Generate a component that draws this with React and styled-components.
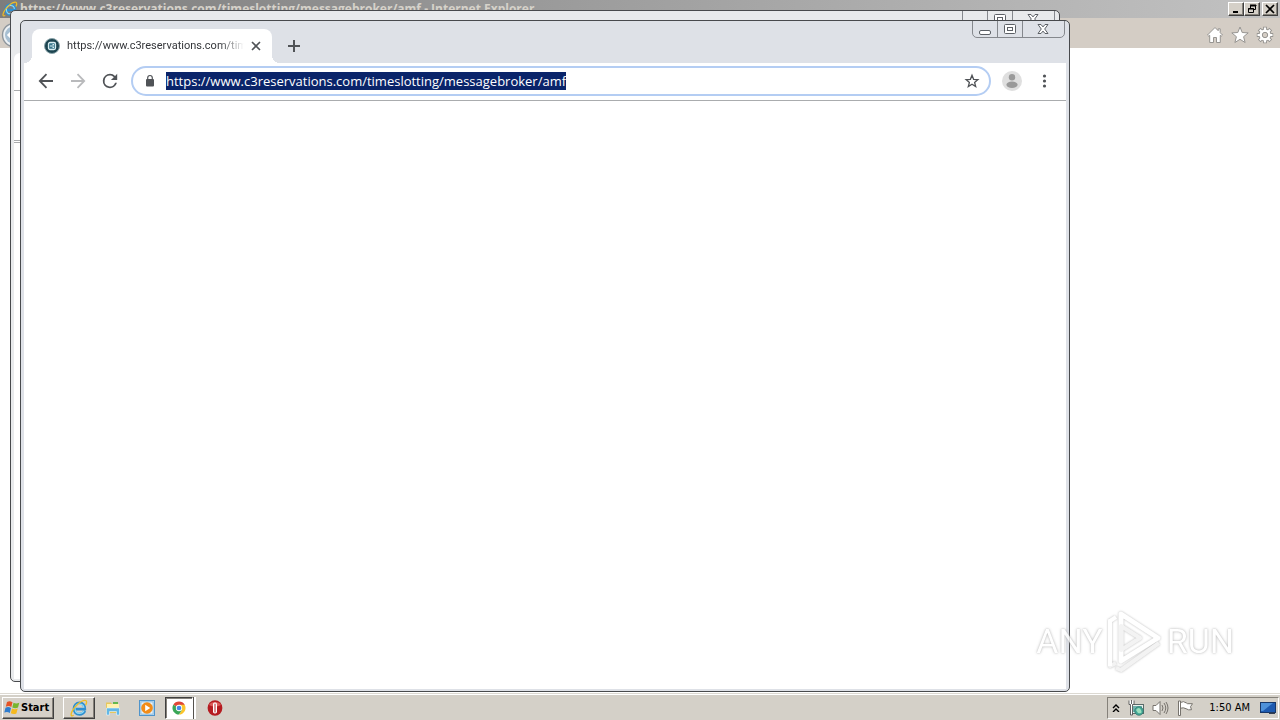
import React from "react";
import styled, { createGlobalStyle, css } from "styled-components";

const PAGE_URL = "https://www.c3reservations.com/timeslotting/messagebroker/amf";

const Global = createGlobalStyle`
  * { box-sizing: border-box; }
  body { margin: 0; background: #fff; font-family: "Open Sans", "Noto Sans", sans-serif; }
  button, input { font: inherit; margin: 0; padding: 0; border: 0; }
  svg { display: block; flex: none; }
`;

const Desktop = styled.div`
  position: relative;
  display: flex;
  flex-direction: column;
  min-height: 100vh;
  overflow: hidden;
`;

/* Internet Explorer */
const Explorer = styled.main`
  flex: 1;
  display: flex;
  flex-direction: column;
`;
const ExplorerTitle = styled.header`
  display: flex;
  align-items: center;
  gap: 2px;
  height: 18px;
  padding: 0 2px;
  background: linear-gradient(90deg, #7d7d7d, #c2c2c2);
`;
const TitleText = styled.h1`
  flex: 1;
  margin: 0;
  color: #d6d2ca;
  font: bold 12px/18px "Open Sans", "DejaVu Sans", sans-serif;
  white-space: nowrap;
`;
const ClassicGroup = styled.div`
  display: flex;
`;
const raised = css`
  background: #d5d0c8;
  border: 1px solid;
  border-color: #fff #404040 #404040 #fff;
  box-shadow: inset -1px -1px #85817a;
`;
const ClassicButton = styled.button`
  ${raised}
  width: 16px;
  height: 14px;
  display: grid;
  place-items: center;
  &:last-child { margin-left: 2px; }
`;
const ExplorerBar = styled.nav`
  display: flex;
  align-items: center;
  justify-content: space-between;
  height: 30px;
  padding: 4px 5px 0 1px;
  background: #d4cdc5;
`;
const IconRow = styled.div`
  display: flex;
  gap: 5px;
`;
const PlainButton = styled.button`
  background: none;
  width: ${(p) => p.$size || 20}px;
  height: ${(p) => p.$size || 20}px;
  display: grid;
  place-items: center;
`;

/* Chrome windows */
const Window = styled.section`
  position: absolute;
  top: ${(p) => p.$offset}px;
  left: ${(p) => p.$offset}px;
  right: ${(p) => 230 - p.$offset}px;
  bottom: ${(p) => 48 - p.$offset}px;
  display: flex;
  flex-direction: column;
  padding: 0 3px 2px;
  border: 1px solid #484a4d;
  border-radius: 5px;
  background: ${(p) => (p.$back ? "#e8eaec" : "#dee1e7")};
  overflow: hidden;
`;
const TabStrip = styled.div`
  display: flex;
  align-items: flex-end;
  height: 42px;
  padding-left: 8px;
`;
const Tab = styled.div`
  position: relative;
  display: flex;
  align-items: center;
  width: 240px;
  height: 34px;
  padding: 0 10px 0 12px;
  border-radius: 8px 8px 0 0;
  background: #fff;
  &::before, &::after {
    content: "";
    position: absolute;
    bottom: 0;
    width: 8px;
    height: 8px;
  }
  &::before { right: 100%; background: radial-gradient(circle at 0 0, transparent 8px, #fff 8px); }
  &::after { left: 100%; background: radial-gradient(circle at 100% 0, transparent 8px, #fff 8px); }
`;
const TabTitle = styled.span`
  flex: 1;
  margin: 0 6px 0 7px;
  overflow: hidden;
  white-space: nowrap;
  color: #34363a;
  font: 11px/16px "Roboto", "Open Sans", sans-serif;
  mask-image: linear-gradient(90deg, #000 calc(100% - 24px), transparent);
`;
const NewTab = styled(PlainButton)`
  margin: 0 0 7px 12px;
`;
const Captions = styled.div`
  position: absolute;
  top: -1px;
  right: 4px;
  display: flex;
  height: 18px;
  border: 1px solid #85888d;
  border-radius: 0 0 5px 5px;
`;
const Caption = styled.button`
  width: ${(p) => (p.$wide ? 42 : 25)}px;
  padding: 0 1px 1px 0;
  background: none;
  display: grid;
  place-items: center;
  & + & { border-left: 1px solid #85888d; }
  &:first-child { width: 24px; }
`;
const Toolbar = styled.div`
  display: flex;
  align-items: center;
  height: 38px;
  padding: 0 10px 1px;
  background: #fff;
  border-bottom: 1px solid #aaacae;
`;
const NavButtons = styled.div`
  display: flex;
  gap: 8px;
  margin-right: 9px;
`;
const Omnibox = styled.div`
  flex: 1;
  display: flex;
  align-items: center;
  height: 30px;
  padding: 0 7px 0 10px;
  border: 2px solid #b4cdf3;
  border-radius: 15px;
  background: #fff;
`;
const AddressSlot = styled.label`
  flex: 1;
  display: flex;
  margin-left: 9px;
`;
const Address = styled.input`
  field-sizing: content;
  height: 18px;
  background: #0a246a;
  color: #fff;
  font-size: 13px;
  line-height: 18px;
  outline: 0;
`;
const Trailing = styled.div`
  display: flex;
  gap: 8px;
  margin-left: 9px;
`;
const Page = styled.div`
  flex: 1;
  background: #fff;
`;
const BackStrip = styled.div`
  height: 42px;
`;
const BackToolbar = styled.div`
  height: 38px;
  border-bottom: 1px solid #aaacae;
  background: #fff;
  border-radius: 6px 0 0 0;
`;
const BackBookmarks = styled.div`
  height: 52px;
  border-bottom: 3px double #aaacae;
  background: #fff;
`;

/* Taskbar */
const Taskbar = styled.footer`
  display: flex;
  align-items: center;
  height: 27px;
  padding: 1px 1px 0 2px;
  background: #d4d0c8;
  border-top: 1px solid #dcd9d2;
  box-shadow: inset 0 1px #fff;
`;
const StartButton = styled.button`
  ${raised}
  display: flex;
  align-items: center;
  width: 52px;
  height: 22px;
  padding-left: 1px;
  color: #000;
  font: bold 11px/16px "DejaVu Sans Condensed", "DejaVu Sans", sans-serif;
`;
const Tasks = styled.div`
  flex: 1;
  display: flex;
  align-items: center;
  gap: 2px;
  margin-left: 9px;
`;
const Task = styled.button`
  width: 32px;
  height: 22px;
  display: grid;
  place-items: center;
  background: none;
  ${(p) => p.$raised && raised}
  ${(p) => p.$pressed && css`
    background: #fff;
    border: 1px solid;
    border-color: #404040 #fff #fff #404040;
    box-shadow: inset 1px 1px #85817a, 1px 0 #55524d, 3px 0 #fff;
    width: 28px;
    margin: 0 4px 0 0;
  `}
`;
const Tray = styled.div`
  display: flex;
  align-items: center;
  gap: 8px;
  height: 22px;
  padding: 0 1px 0 4px;
  border: 1px solid;
  border-color: #85817a #fff #fff #85817a;
`;
const Clock = styled.time`
  margin: 0 2px 0 8px;
  color: #000;
  font: 11px/16px "DejaVu Sans Condensed", "DejaVu Sans", sans-serif;
  white-space: nowrap;
`;

const Watermark = styled.div`
  position: absolute;
  right: 46px;
  bottom: 47px;
  display: flex;
  align-items: center;
  gap: 4px;
  color: #fff;
  opacity: 0.8;
  font: 34px/64px "Roboto", sans-serif;
  text-shadow: 0 0 3px #aaa, 0 0 1px #bbb;
  pointer-events: none;
`;

const IeLogo = ({ size }) => (
  <svg width={size} height={size} viewBox="0 0 20 20" fill="none">
    <path d="M16.5 13.3C15.3 15.8 13 17 10.5 17 7 17 4.5 14.3 4.5 10.8S7 4.5 10.6 4.5s6 2.6 5.8 6.7H6" stroke="#2f8fd0" strokeWidth="3.2" />
    <path d="M15.5 13C14.5 15.2 12.7 16 10.5 16 7.6 16 5.6 13.8 5.6 10.8s2-5.2 5-5.2 4.8 2 4.8 4.5" stroke="#8fdcf7" strokeWidth="1.3" />
    <path d="M4 18C1.5 20 .2 18 2.3 13.7 5 8 13 .8 17 1.5c2 .3 1.7 3 .4 5.3" stroke="#efbd25" strokeWidth="1.5" />
  </svg>
);
const BackOrb = () => (
  <svg width="26" height="26" viewBox="0 0 26 26">
    <circle cx="13" cy="13" r="11.5" fill="#edf1f4" stroke="#8e969d" strokeWidth="1.4" />
    <circle cx="13" cy="13" r="9" fill="#a7bfd2" />
    <path d="M19 13H8m5-5-5 5 5 5" stroke="#fff" strokeWidth="3" fill="none" />
  </svg>
);
const Home = () => (
  <svg width="18" height="18" viewBox="0 0 18 18" fill="#fff" stroke="#969491">
    <path d="M9 1.5 1.5 9l1.2 1.1 1-.8v7.2h3.8v-5h3v5h3.8V9.3l1 .8L16.5 9l-2.300-2.300V2.800h-2v1.900Z" />
  </svg>
);
const Favorite = () => (
  <svg width="18" height="18" viewBox="0 0 18 18" fill="#fff" stroke="#969491">
    <path d="m9 1 2.200 5.500 6 .4-4.600 3.800 1.500 5.800L9 13.300l-5.100 3.200 1.500-5.800L.8 6.900l6-.4Z" />
  </svg>
);
const Gear = () => (
  <svg width="18" height="18" viewBox="0 0 18 18">
    <g stroke="#969491" strokeWidth="4"><path d="M9 .8v16.400M.8 9h16.400M3.200 3.200l11.600 11.600M14.800 3.200 3.200 14.800" /></g>
    <circle cx="9" cy="9" r="6.500" fill="#969491" />
    <g stroke="#fff" strokeWidth="2.200"><path d="M9 1.500v15M1.500 9h15M3.800 3.800l10.400 10.400M14.200 3.800 3.800 14.200" /></g>
    <circle cx="9" cy="9" r="5.500" fill="#fff" />
    <circle cx="9" cy="9" r="2.700" fill="#d4cdc5" stroke="#969491" />
  </svg>
);
const Favicon = () => (
  <svg width="16" height="16" viewBox="0 0 16 16">
    <circle cx="8" cy="8" r="7.500" fill="#1c4450" stroke="#8ba4aa" />
    <rect x="4.500" y="4.500" width="7" height="7" rx="1.500" fill="#38768b" stroke="#d8edf1" strokeWidth="1.300" />
    <path d="M6 8h4M8.500 6.500H10M8.500 9.500H10" stroke="#d8edf1" />
  </svg>
);
const Stroke = ({ size = 20, d, color = "#505357", width = 2 }) => (
  <svg width={size} height={size} viewBox={`0 0 ${size} ${size}`} fill="none" stroke={color} strokeWidth={width}>
    <path d={d} />
  </svg>
);
const Reload = () => (
  <svg width="24" height="24" viewBox="0 0 24 24" fill="#505357">
    <path d="M17.650 6.350A7.960 7.960 0 0 0 12 4a8 8 0 1 0 7.730 10h-2.080A6 6 0 1 1 12 6c1.660 0 3.140.690 4.220 1.780L13 11h7V4z" transform="translate(1.200 1.200) scale(.9)" />
  </svg>
);
const Lock = () => (
  <svg width="14" height="14" viewBox="0 0 14 14">
    <rect x="3" y="5" width="8" height="7.500" rx="1" fill="#505357" />
    <path d="M4.700 5.500V3.800a2.300 2.300 0 0 1 4.600 0v1.700" fill="none" stroke="#505357" strokeWidth="1.200" />
  </svg>
);
const Avatar = () => (
  <svg width="20" height="20" viewBox="0 0 20 20">
    <circle cx="10" cy="10" r="10" fill="#dfdfdf" />
    <circle cx="10" cy="6.200" r="3.200" fill="#9a9a9a" />
    <ellipse cx="10" cy="13.800" rx="5.600" ry="3.200" fill="#9a9a9a" />
  </svg>
);
const Dots = () => (
  <svg width="20" height="20" viewBox="0 0 20 20" fill="#505357">
    <circle cx="10.500" cy="5" r="1.600" /><circle cx="10.500" cy="10" r="1.600" /><circle cx="10.500" cy="15" r="1.600" />
  </svg>
);
const WindowCaptions = () => (
  <Captions>
    <Caption aria-label="Minimize">
      <svg width="14" height="14" viewBox="0 0 14 14"><rect x="1.500" y="8.500" width="11" height="4" rx="1.500" fill="#fff" stroke="#5c6066" /></svg>
    </Caption>
    <Caption aria-label="Maximize">
      <svg width="14" height="14" viewBox="0 0 14 14" fill="#fff" stroke="#5c6066"><rect x="1.500" y="2.500" width="11" height="9" rx="1" /><rect x="4.500" y="5.500" width="5" height="3" /></svg>
    </Caption>
    <Caption $wide aria-label="Close">
      <svg width="14" height="14" viewBox="0 0 14 14"><path d="M2 2.500h3l2 2.400 2-2.400h3L8.700 7l3.300 4.500H9L7 9.100l-2 2.400H2L5.300 7Z" fill="#fff" stroke="#5c6066" /></svg>
    </Caption>
  </Captions>
);

const WindowsFlag = () => (
  <svg width="17" height="16" viewBox="0 0 17 16">
    <path d="M3 2c2-1 3.500-1 5.500.3L7.300 7C5.500 5.800 4 5.800 1.800 6.700Z" fill="#e55325" />
    <path d="M9.500 2.800c2 1 3.700.9 5.800 0L14 7.500c-2 1-3.800.8-5.700-.1Z" fill="#77b52d" />
    <path d="M1.500 7.800c2-1 3.800-.9 5.500.3l-1.200 4.800C4 11.700 2.300 11.700.3 12.500Z" fill="#2e7cce" />
    <path d="M8 8.500c1.900 1 3.700 1 5.700.1l-1.300 4.800c-2 1-3.800.8-5.600-.1Z" fill="#f5b91f" />
  </svg>
);
const Folder = () => (
  <svg width="18" height="18" viewBox="0 0 18 18">
    <path d="M2 3.500h5l1 1.500h7v9H2Z" fill="#e7c75d" />
    <path d="M3 5h12v5H3Z" fill="#fff2ae" /><path d="M9 3h5v2H9Z" fill="#63b84f" />
    <path d="M2.500 9h13v7h-3v-3.500h-7V16h-3Z" fill="#62b7e7" stroke="#eaf7fd" strokeWidth=".6" />
  </svg>
);
const MediaPlayer = () => (
  <svg width="16" height="16" viewBox="0 0 16 16">
    <rect x=".5" y=".5" width="15" height="15" fill="#b6d7ef" stroke="#4f94cb" />
    <rect x="2" y="2" width="12" height="12" fill="#e9f4fa" stroke="#79afd7" strokeWidth=".6" />
    <circle cx="8" cy="8" r="5.800" fill="#f28c18" /><path d="M6.200 4.700 11.200 8l-5 3.300Z" fill="#fff" />
  </svg>
);
const ChromeLogo = () => (
  <svg width="14" height="14" viewBox="0 0 16 16">
    <path d="M8 8 1.500 4.300a7.500 7.500 0 0 1 13 0Z" fill="#df4637" />
    <path d="M8 8V4.300h6.500A7.500 7.500 0 0 1 8 15.500L11.500 10Z" fill="#fbc52c" />
    <path d="M8 8 1.500 4.300A7.500 7.500 0 0 0 8 15.500l3-5Z" fill="#39a657" />
    <circle cx="8" cy="8" r="3.600" fill="#fff" /><circle cx="8" cy="8" r="2.700" fill="#4688e7" />
  </svg>
);
const OperaLogo = () => (
  <svg width="16" height="16" viewBox="0 0 16 16">
    <ellipse cx="8" cy="8" rx="7.400" ry="7.700" fill="#b51b20" />
    <path d="M2 5a6.500 5 0 0 1 12 0q-6 3-12 0" fill="#dc5c59" />
    <rect x="6" y="2.500" width="4" height="11" rx="1.800" fill="#fff" />
    <rect x="7.500" y="3.500" width="1" height="9" rx=".5" fill="#b51b20" />
  </svg>
);
const TrayNetwork = () => (
  <svg width="16" height="16" viewBox="0 0 16 16">
    <rect x="3.500" y="4.500" width="12" height="9" fill="#e9efec" stroke="#5a6a69" />
    <path d="M5 6h9v6H5Z" fill="#6fb2ad" /><circle cx="11" cy="11" r="4.300" fill="#43a594" stroke="#31746c" strokeWidth=".7" />
    <path d="M8 10q3-4 5 0t-3 3" fill="#9be0be" />
    <path d="M1 .5v4h1.500V15h2V4.500H6v-4M3.500 0v4" fill="#fff" stroke="#555" strokeWidth=".9" />
  </svg>
);
const TrayVolume = () => (
  <svg width="17" height="16" viewBox="0 0 17 16" fill="none" stroke="#77736d">
    <path d="M1 5.500h3l4-4v13l-4-4H1Z" fill="#fff" /><path d="M10 5q2 3 0 6M12 3q3.500 5 0 10M14 2q4 6 0 12" />
  </svg>
);
const TrayFlag = () => (
  <svg width="16" height="16" viewBox="0 0 16 16" fill="#fff" stroke="#77736d">
    <path d="M3.500 2.500q3-2 6 .5l1 .7h5l-2 3 1 3q-3 .8-5.500-1-2.500-1.500-5.500-.5Z" /><path d="M1.500 1h2v14.500h-2Z" />
  </svg>
);
const TrayScreen = () => (
  <svg width="17" height="14" viewBox="0 0 17 14">
    <rect x=".5" y="1.500" width="15" height="10" fill="#1e5ab0" stroke="#173769" />
    <path d="M1 2h12L3 10H1Z" fill="#4e91d9" /><path d="M9 11.500h6V13H9Z" fill="#353e50" />
  </svg>
);
const PlayMark = () => (
  <svg width="56" height="64" viewBox="0 0 56 64" fill="none" strokeLinejoin="round" style={{ filter: "drop-shadow(0 0 1px #aaa)" }}>
    <path d="M14 5 51 29 14 52Z" stroke="#fff" strokeWidth="5" />
    <path d="M14 17v24l19-12ZM3 10v47l6-3M9 59l5 2 38-27" stroke="#f1f1f1" strokeWidth="4" />
    <path d="M3 57V12l6-4" stroke="#fff" strokeWidth="4" />
  </svg>
);

export default function App() {
  return (
    <>
      <Global />
      <Desktop>
        <Explorer>
          <ExplorerTitle>
            <IeLogo size={16} />
            <TitleText>{PAGE_URL} - Internet Explorer</TitleText>
            <ClassicGroup>
              <ClassicButton aria-label="Minimize window"><Stroke size={10} d="M2 8h5" color="#000" /></ClassicButton>
              <ClassicButton aria-label="Restore window">
                <svg width="10" height="10" viewBox="0 0 10 10" fill="none" stroke="#000"><path d="M3.500 4V1.500h5v4H7M3 1h6v1H3M1.500 4.500h5v4h-5ZM1 5h6" /></svg>
              </ClassicButton>
              <ClassicButton aria-label="Close window"><Stroke size={10} d="m1 1 8 8M9 1 1 9" color="#000" width={1.7} /></ClassicButton>
            </ClassicGroup>
          </ExplorerTitle>
          <ExplorerBar>
            <PlainButton $size={26} aria-label="Back in Explorer"><BackOrb /></PlainButton>
            <IconRow>
              <PlainButton aria-label="Home"><Home /></PlainButton>
              <PlainButton aria-label="Favorites"><Favorite /></PlainButton>
              <PlainButton aria-label="Tools"><Gear /></PlainButton>
            </IconRow>
          </ExplorerBar>
        </Explorer>

        <Window $offset={10} $back>
          <WindowCaptions />
          <BackStrip />
          <BackToolbar />
          <BackBookmarks />
          <Page />
        </Window>

        <Window $offset={20}>
          <TabStrip>
            <Tab>
              <Favicon />
              <TabTitle>{PAGE_URL}</TabTitle>
              <PlainButton $size={12} aria-label="Close tab"><Stroke size={12} d="m2 2 8 8M10 2l-8 8" width={1.6} /></PlainButton>
            </Tab>
            <NewTab aria-label="New tab"><Stroke d="M10 4v12M4 10h12" /></NewTab>
          </TabStrip>
          <WindowCaptions />
          <Toolbar>
            <NavButtons>
              <PlainButton $size={24} aria-label="Back"><Stroke size={24} d="M19 12H6M12.500 5.200 5.800 12l6.700 6.800" width={1.8} /></PlainButton>
              <PlainButton $size={24} aria-label="Forward"><Stroke size={24} color="#b9babc" d="M5 12h13M11.500 5.200l6.700 6.800-6.700 6.800" width={1.8} /></PlainButton>
              <PlainButton $size={24} aria-label="Reload"><Reload /></PlainButton>
            </NavButtons>
            <Omnibox>
              <Lock />
              <AddressSlot>
                <Address aria-label="Address" defaultValue={PAGE_URL} spellCheck={false} />
              </AddressSlot>
              <PlainButton aria-label="Bookmark">
                <Stroke d="m10 4.300 1.600 4 4.300.3-3.300 2.800 1.100 4.200-3.700-2.300-3.700 2.300 1.100-4.200-3.300-2.800 4.300-.3Z" width={1.3} />
              </PlainButton>
            </Omnibox>
            <Trailing>
              <PlainButton $size={24} aria-label="Profile"><Avatar /></PlainButton>
              <PlainButton $size={24} aria-label="Menu"><Dots /></PlainButton>
            </Trailing>
          </Toolbar>
          <Page />
        </Window>

        <Taskbar>
          <StartButton><WindowsFlag />Start</StartButton>
          <Tasks>
            <Task $raised aria-label="Internet Explorer"><IeLogo size={18} /></Task>
            <Task aria-label="File Explorer"><Folder /></Task>
            <Task aria-label="Media Player"><MediaPlayer /></Task>
            <Task $pressed aria-label="Chrome"><ChromeLogo /></Task>
            <Task aria-label="Opera"><OperaLogo /></Task>
          </Tasks>
          <Tray>
            <Stroke size={8} d="m1 4 3-3 3 3M1 8l3-3 3 3" color="#000" width={1.4} />
            <TrayNetwork />
            <TrayVolume />
            <TrayFlag />
            <Clock>1:50 AM</Clock>
            <TrayScreen />
          </Tray>
        </Taskbar>

        <Watermark><span>ANY</span><PlayMark /><span>RUN</span></Watermark>
      </Desktop>
    </>
  );
}
